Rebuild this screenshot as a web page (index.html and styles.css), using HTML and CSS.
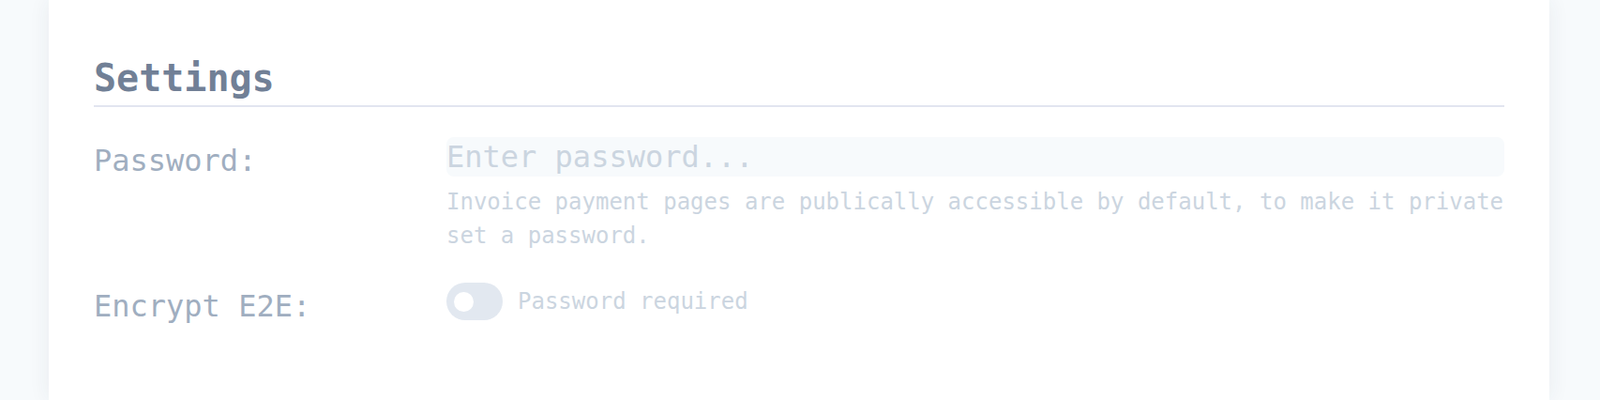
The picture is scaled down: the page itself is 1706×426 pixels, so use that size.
FILE: index.html
```html
<!DOCTYPE html>
<html lang="en">
<head>
<meta charset="utf-8">
<title>Settings</title>
<link rel="stylesheet" href="styles.css">
</head>
<body>
<div class="page">
  <section class="card">
    <h2 class="heading">Settings</h2>
    <div class="form">
      <label class="label" for="pw">Password:</label>
      <div class="field">
        <input id="pw" class="input" type="password" placeholder="Enter password...">
        <p class="help">Invoice payment pages are publically accessible by default, to make it private set a password.</p>
      </div>
      <span class="label">Encrypt E2E:</span>
      <div class="field toggle-row">
        <span class="toggle"><span class="knob"></span></span>
        <span class="toggle-text">Password required</span>
      </div>
    </div>
  </section>
</div>
</body>
</html>
```
FILE: styles.css
```css
html, body {
  margin: 0;
  padding: 0;
}
body {
  background: #f7fafc;
  height: 426px;
  overflow: hidden;
  font-family: "DejaVu Sans Mono", "Liberation Mono", monospace;
}
.page {
  padding: 0 54px 0 52px;
}
.card {
  background: #ffffff;
  box-shadow: 0 0 22px rgba(45, 55, 72, 0.07);
  padding: 59px 48px 60px;
  min-height: 426px;
  box-sizing: border-box;
}
.heading {
  margin: 0 0 32px;
  font-size: 40px;
  line-height: 48px;
  font-weight: bold;
  color: #718096;
  padding-bottom: 5px;
  border-bottom: 2px solid #e2e5f0;
}
.form {
  display: grid;
  grid-template-columns: 376px 1fr;
  row-gap: 32px;
  align-items: start;
}
.label {
  font-size: 32px;
  line-height: 52px;
  color: #a0aec0;
  margin-top: -1px;
}
.field {
  min-width: 0;
}
.input {
  display: block;
  width: 100%;
  height: 42px;
  box-sizing: border-box;
  border: none;
  outline: none;
  padding: 0;
  margin: 0;
  border-radius: 8px;
  background: #f7fafc;
  font-family: inherit;
  font-size: 32px;
  color: #4a5568;
}
.input::placeholder {
  color: #cbd5e0;
  opacity: 1;
}
.help {
  margin: 9px 0 0;
  font-size: 24px;
  line-height: 36px;
  color: #cbd5e0;
}
.toggle-row {
  display: flex;
  align-items: center;
  gap: 16px;
  height: 40px;
}
.toggle {
  display: flex;
  align-items: center;
  width: 60px;
  height: 40px;
  border-radius: 20px;
  background: #e2e8f0;
  padding-left: 8px;
  box-sizing: border-box;
  flex: none;
}
.knob {
  width: 21px;
  height: 21px;
  border-radius: 50%;
  background: #ffffff;
}
.toggle-text {
  font-size: 24px;
  line-height: 40px;
  color: #cbd5e0;
}
```
